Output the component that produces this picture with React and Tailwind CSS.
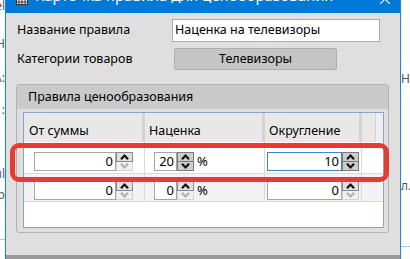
import React from 'react';

const font = { fontFamily: '"Noto Sans", "Open Sans", sans-serif' };

const Arrow = ({ up, on }) => (
  <svg width="9" height="6" viewBox="0 0 9 6">
    <path
      d={up ? 'M1 5.2 L4.5 1.6 L8 5.2' : 'M1 0.8 L4.5 4.4 L8 0.8'}
      fill="none"
      stroke={on ? '#111' : '#b0b0b0'}
      strokeWidth="2.2"
    />
  </svg>
);

const Spinner = ({ hot, downOn }) => (
  <div className="flex flex-col w-[17px] h-[19px]">
    <div
      className={
        hot
          ? 'h-[10px] flex items-center justify-center bg-[#cdcdcd] border border-[#7a7a7a]'
          : 'h-[10px] flex items-center justify-center bg-[#e1e1e1] border border-[#8a8a8a]'
      }
    >
      <Arrow up on />
    </div>
    <div
      className={
        hot || downOn
          ? 'h-[9px] flex items-center justify-center bg-[#cdcdcd] border border-t-0 border-[#7a7a7a]'
          : 'h-[9px] flex items-center justify-center bg-[#f0f0f0] border border-t-0 border-[#d4d4d4]'
      }
    >
      <Arrow on={hot || downOn} />
    </div>
  </div>
);

const Num = ({ value, width, focus, hot, downOn, pct }) => (
  <div className="flex items-center">
    <div
      className={
        focus
          ? 'h-[19px] bg-white border border-[#3a86d0] flex items-center justify-end pr-[2px] text-[13px] text-black'
          : 'h-[19px] bg-white border border-[#a5a5a5] flex items-center justify-end pr-[2px] text-[13px] text-black'
      }
      style={{ width }}
    >
      {value}
    </div>
    <Spinner hot={hot} downOn={downOn} />
    {pct && <span className="ml-[3px] text-[13px] text-black">%</span>}
  </div>
);

const Row = ({ bg, h, pt, cells }) => (
  <div className={`grid grid-cols-[121px_120px_97px_21px] border-b border-[#dadada] ${bg} ${h}`}>
    <div className={`border-r border-[#dadada] pl-[10px] ${pt}`}>{cells[0]}</div>
    <div className={`border-r border-[#dadada] pl-[9px] ${pt}`}>{cells[1]}</div>
    <div className={`border-r border-[#dadada] pl-[2px] ${pt}`}>{cells[2]}</div>
    <div />
  </div>
);

const App = () => {
  return (
    <div className="w-[410px] h-[259px] flex bg-white overflow-hidden" style={font}>
      {/* left edge of the window behind */}
      <div className="w-[5px] flex flex-col items-end text-[12px] text-[#555] leading-none overflow-hidden">
        <span className="mt-[0px]">el</span>
        <span className="mt-[26px]">Н</span>
        <span className="mt-[22px]">\:</span>
        <span className="mt-[20px]">:</span>
        <span className="mt-[52px]">ıl</span>
        <span className="mt-[9px]">cp</span>
        <div className="mt-[38px] w-[5px] h-px bg-[#9cc8ee]" />
      </div>

      {/* dialog */}
      <div className="w-[396px] h-[259px] flex flex-col border-x border-[#1883d7] bg-[#dfdfdf]">
        <div className="h-[13px] bg-[#0078d7] flex items-start overflow-hidden shrink-0">
          <svg className="ml-[10px]" width="12" height="5" viewBox="0 0 12 5">
            <rect x="0.5" y="-3" width="11" height="7.5" fill="#fff" stroke="#333" />
            <path d="M3 -1 V4 M6 -1 V4 M9 -1 V4 M1 2 H11" stroke="#333" strokeWidth="1" />
          </svg>
          <span className="ml-[7px] mt-[-12px] text-[15px] leading-[15px] text-white whitespace-nowrap">
            Карточка правила для ценообразования
          </span>
          <svg className="ml-auto mr-[9px]" width="11" height="4" viewBox="0 0 11 4">
            <path d="M0 -6 L10 4 M10 -6 L0 4" stroke="#fff" strokeWidth="1.2" />
          </svg>
        </div>

        <div className="flex items-center mt-[6px] h-[23px]">
          <span className="ml-[11px] w-[155px] text-[12.5px] text-black">Название правила</span>
          <div className="w-[208px] h-[23px] bg-white border border-[#ababab] flex items-center pl-[2px] text-[12.5px] text-black">
            Наценка на телевизоры
          </div>
        </div>

        <div className="flex items-center mt-[6px] h-[22px]">
          <span className="ml-[11px] w-[157px] text-[12.5px] text-black">Категории товаров</span>
          <div className="w-[163px] h-[22px] bg-[#c5c5c5] border border-[#adadad] rounded-[2px] flex items-center justify-center text-[12.5px] text-black">
            Телевизоры
          </div>
        </div>

        {/* group box */}
        <div className="mt-[14px] ml-[10px] w-[373px] h-[149px] border border-[#b2b2b2] rounded-[3px] flex flex-col">
          <div className="h-[24px] bg-[#cacaca] flex items-center pl-[11px] text-[12.5px] text-black shrink-0">
            Правила ценообразования
          </div>
          <div className="mt-[3px] ml-[6px] w-[361px] h-[116px] border border-[#87a3c9] bg-white flex flex-col">
            <div className="grid grid-cols-[121px_120px_97px_21px] h-[29px] bg-[#e8e8e8] text-[12.5px] text-black">
              <div className="border-r-[3px] border-[#d3d3d3] pl-[5px] flex items-end pb-[1px]">От суммы</div>
              <div className="border-r-[3px] border-[#d3d3d3] pl-[4px] flex items-end pb-[1px]">Наценка</div>
              <div className="border-r-[3px] border-[#d3d3d3] pl-[4px] flex items-end pb-[1px]">Округление</div>
              <div className="flex">
                <div className="w-[14px] border-r border-[#d3d3d3]" />
                <div className="flex-1 bg-[#efefef]" />
              </div>
            </div>
            <Row
              bg="bg-white"
              h="h-[32px]"
              pt="pt-[10px]"
              cells={[
                <Num value="0" width={82} />,
                <Num value="20" width={23} hot pct />,
                <Num value="10" width={75} focus hot />,
              ]}
            />
            <Row
              bg="bg-[#f3f3f3]"
              h="h-[28px]"
              pt="pt-[7px]"
              cells={[
                <Num value="0" width={82} />,
                <Num value="0" width={23} pct />,
                <Num value="0" width={75} />,
              ]}
            />
          </div>
        </div>

        <div className="mt-auto h-[4px] bg-[#9a9a9a]" />
      </div>

      {/* right edge of the window behind */}
      <div className="flex-1 flex flex-col text-[12px] text-[#555] leading-none overflow-hidden">
        <span className="mt-[73px] whitespace-nowrap">На</span>
        <span className="mt-[95px] whitespace-nowrap">л.)</span>
        <div className="mt-[54px] h-px bg-[#9cc8ee]" />
      </div>

      {/* red highlight around the first row */}
      <div className="absolute left-[10px] top-[143px] w-[379px] h-[39px] border-[5px] border-[#e53b30] rounded-[9px]" />
    </div>
  );
};

export default App;
